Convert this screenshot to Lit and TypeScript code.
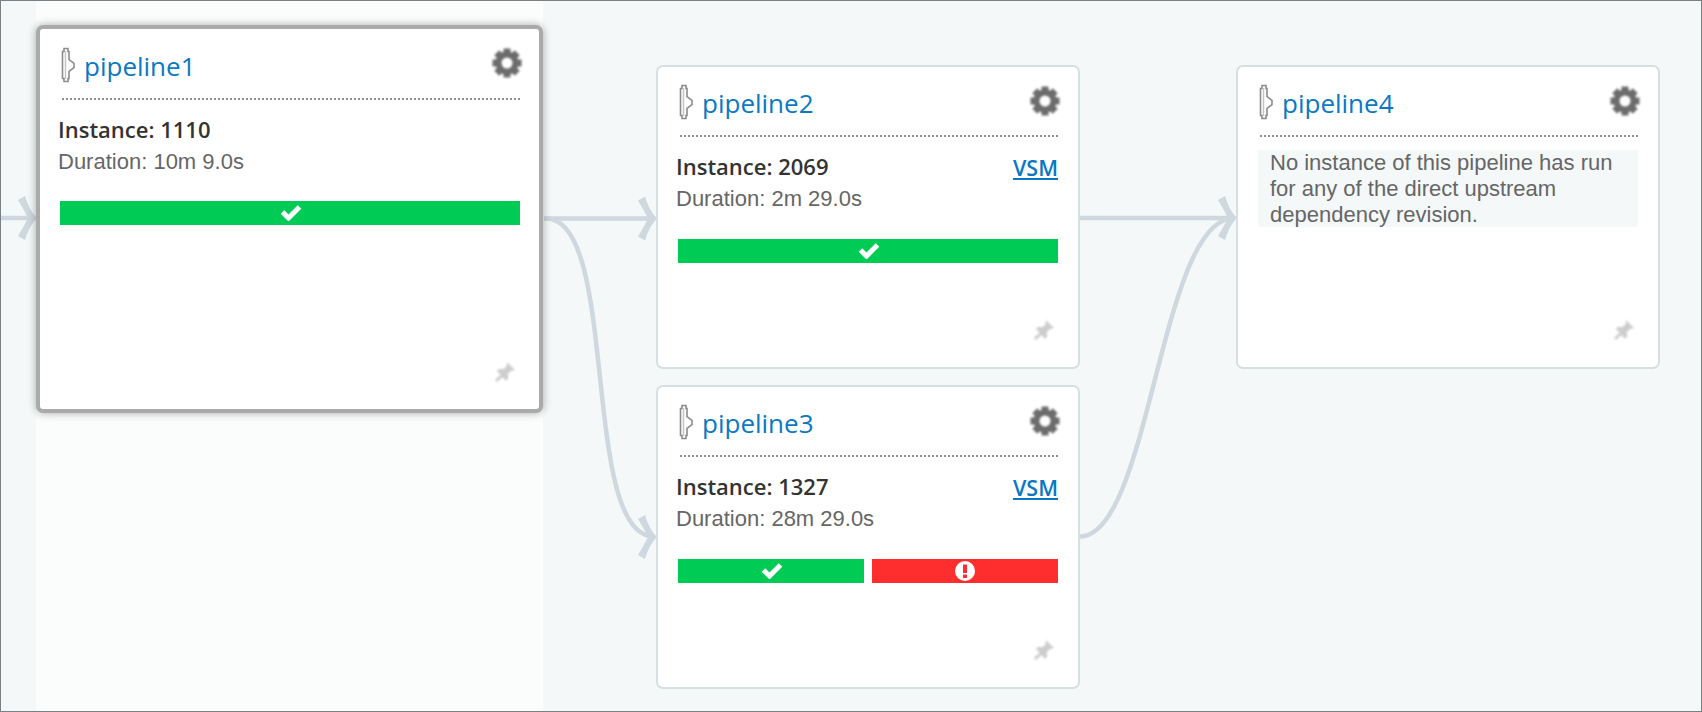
import { LitElement, html, css, svg } from "lit";
import { customElement } from "lit/decorators.js";

const pipeIcon = html`<svg class="pipe" viewBox="0 0 16 36" width="16" height="36">
  <path d="M3 1.500h4v3h1v8l5 4v4l-5 4v7H7v3H3v-3H1.500V4.500H3z" fill="#fff" stroke="#8c8c8c" stroke-width="1.600"/>
  <path d="M4.500 4v28" stroke="#c4c4c4" stroke-width="1.500"/>
</svg>`;

const teeth = [0, 45, 90, 135, 180, 225, 270, 315];
const gear = html`<svg class="gear" viewBox="0 0 32 32" width="32" height="32">
  <g fill="#6c6c6c">
    ${teeth.map((a) => svg`<rect x="12.500" y="1.500" width="7" height="7" transform="rotate(${a} 16 16)"/>`)}
  </g>
  <circle cx="16" cy="16" r="8.500" fill="none" stroke="#6c6c6c" stroke-width="6"/>
</svg>`;

const pin = html`<svg class="pin" viewBox="0 0 24 24" width="26" height="26">
  <path d="M14 3l7 7-2 1-1-.5-3.500 3.500.5 4-2 2-3.500-3.500L5 21l-1.500-.5L3 19l5-4.500L4.500 11l2-2 4 .5L14 6l-.5-1z" fill="#cdcdcd"/>
</svg>`;

const check = html`<svg class="st ck" viewBox="0 0 22 18" width="22" height="18">
  <path d="M2.500 9l6 6L19.500 4" fill="none" stroke="#fff" stroke-width="5"/>
</svg>`;

const alert = html`<svg class="st" viewBox="0 0 22 22" width="22" height="22">
  <circle cx="11" cy="11" r="10" fill="#fff"/>
  <rect x="9" y="4.500" width="4" height="8.500" fill="#ff2e2e"/>
  <rect x="9" y="14.500" width="4" height="3.500" fill="#ff2e2e"/>
</svg>`;

const head = "M-18 -18L-11 -22Q-7 -8 1 0Q-7 8 -11 22L-18 18Q-12 8 -8 0Q-12 -8 -18 -18Z";
const arrow = (x: number, y: number) => svg`<path d=${head} transform="translate(${x} ${y})" fill="#ced8de" stroke="none"/>`;

@customElement("app-root")
export class AppRoot extends LitElement {
  static styles = css`
    :host { display: block; }
    .stage {
      position: relative; box-sizing: border-box; width: 1702px; height: 712px;
      border: 1px solid #7b8085; background: #f4f8f9; overflow: hidden;
      display: flex; align-items: flex-start; padding-left: 35px;
      font-family: "Liberation Sans", Arial, sans-serif;
    }
    .edges { position: absolute; left: -1px; top: -1px; }
    .highlight {
      width: 507px; height: 100%; background: #fbfdfd; flex: none;
      box-sizing: border-box; padding-top: 24px; position: relative;
    }
    .col2 { margin-left: 113px; width: 424px; padding-top: 64px; flex: none; position: relative; display: flex; flex-direction: column; gap: 16px; }
    .col3 { margin-left: 156px; width: 424px; padding-top: 64px; flex: none; position: relative; }
    .card {
      box-sizing: border-box; background: #fff; border: 2px solid #d6e0e2; border-radius: 7px;
      height: 304px; padding: 14px 20px 0 18px; display: flex; flex-direction: column; position: relative;
    }
    .card.sel {
      border: 4px solid #aaa; height: 388px; padding: 15px 19px 0 18px;
      box-shadow: 0 0 8px rgba(0,0,0,.32);
    }
    .head {
      display: flex; align-items: center; height: 56px; box-sizing: border-box;
      border-bottom: 2px dotted #8f8f8f; margin-left: 4px; padding-bottom: 7px;
    }
    .pipe { filter: blur(.35px); flex: none; margin-left: -1px; margin-right: 7px; position: relative; top: -3px; }
    .name { font: 26px "Open Sans", sans-serif; color: #0a78c2; flex: 1; position: relative; top: -1.500px; }
    .gear { filter: blur(.8px); flex: none; position: relative; top: -4px; margin-right: -3px; }
    .sel .gear { top: -5px; }
    .info { display: flex; justify-content: space-between; padding-top: 15px; }
    .inst { font: 600 22px/28px "Open Sans", sans-serif; color: #333; }
    .dur { font-size: 22px; line-height: 32px; color: #666; margin-top: 3px; }
    .vsm { font: 600 21.500px/28px "Open Sans", sans-serif; color: #0a78c2; text-decoration: underline; margin-top: 2px; }
    .bars { display: flex; gap: 8px; margin: 24px 0 0 2px; }
    .sel .bars { margin-top: 23px; }
    .bar { flex: 1; height: 24px; display: flex; align-items: center; justify-content: center; }
    .ok { background: #00cc55; }
    .bad { background: #ff2e2e; }
    .ck { margin: -2px 0 0 1px; }
    .pin { filter: blur(.8px); position: absolute; right: 21px; bottom: 24px; }
    .msg {
      background: #f4f8f9; color: #666; font-size: 22px; line-height: 26px;
      margin-top: 13px; padding: 0 12px; height: 77px; box-sizing: border-box; margin-left: 2px;
      white-space: nowrap; overflow: hidden;
    }
  `;

  card(name: string, inst: string, dur: string, vsm: boolean, bars: string[], sel = false) {
    return html`<div class="card ${sel ? "sel" : ""}">
      <div class="head">${pipeIcon}<span class="name">${name}</span>${gear}</div>
      <div class="info">
        <div>
          <div class="inst">Instance: ${inst}</div>
          <div class="dur">Duration: ${dur}</div>
        </div>
        ${vsm ? html`<a class="vsm">VSM</a>` : ""}
      </div>
      <div class="bars">
        ${bars.map((b) => html`<div class="bar ${b}">${b === "ok" ? check : alert}</div>`)}
      </div>
      ${pin}
    </div>`;
  }

  render() {
    return html`<div class="stage">
      <svg class="edges" width="1702" height="712" fill="none" stroke="#ced8de" stroke-width="4.500">
        <path d="M0 218H34"/>
        ${arrow(36, 218)}
        <path d="M544 218.500H654"/>
        ${arrow(656, 218.500)}
        <path d="M546 218.500C620 218.500 580 536.500 654 536.500"/>
        ${arrow(656, 537)}
        <path d="M1080 218H1234"/>
        ${arrow(1236, 218)}
        <path d="M1080 536.500C1150 536.500 1160 218 1234 218"/>
      </svg>
      <div class="highlight">${this.card("pipeline1", "1110", "10m 9.0s", false, ["ok"], true)}</div>
      <div class="col2">
        ${this.card("pipeline2", "2069", "2m 29.0s", true, ["ok"])}
        ${this.card("pipeline3", "1327", "28m 29.0s", true, ["ok", "bad"])}
      </div>
      <div class="col3">
        <div class="card">
          <div class="head">${pipeIcon}<span class="name">pipeline4</span>${gear}</div>
          <div class="msg">No instance of this pipeline has run<br />for any of the direct upstream<br />dependency revision.</div>
          ${pin}
        </div>
      </div>
    </div>`;
  }
}
